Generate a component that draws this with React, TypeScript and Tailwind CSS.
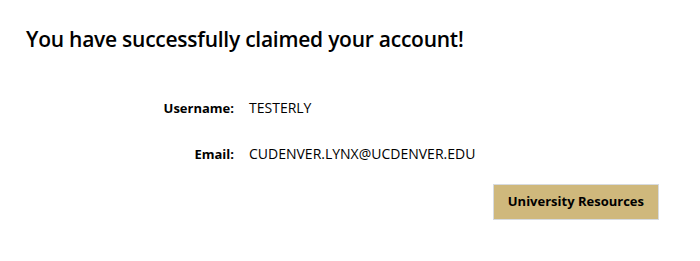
export default function App() {
  return (
    <div className="w-[700px] h-[261px] bg-white text-black font-['Open_Sans','Noto_Sans',sans-serif] px-[26px] pt-[24px]">
      <h1 className="text-[21px] font-semibold leading-[30px] tracking-[-0.25px]">
        You have successfully claimed your account!
      </h1>
      <div className="mt-[44px] grid grid-cols-[208px_1fr] gap-x-[15px] gap-y-[26px] leading-[20px]">
        <div className="text-right font-bold text-[13px]">Username:</div>
        <div className="text-[14px]">TESTERLY</div>
        <div className="text-right font-bold text-[13px]">Email:</div>
        <div className="text-[14px]">CUDENVER.LYNX@UCDENVER.EDU</div>
      </div>
      <div className="flex justify-end pr-[15px] mt-[20px]">
        <button className="h-[36px] px-[14px] bg-[#cfb87c] border border-[#d7dbe0] text-[13px] font-bold">
          University Resources
        </button>
      </div>
    </div>
  );
}
